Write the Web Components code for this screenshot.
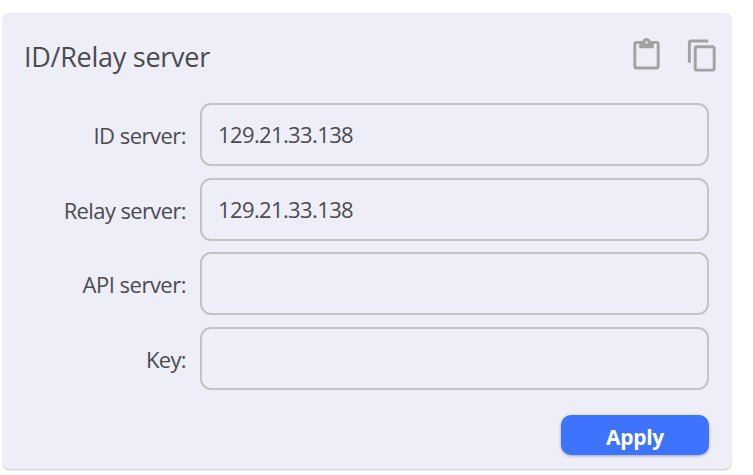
<!DOCTYPE html>
<html lang="en">
<head>
<meta charset="utf-8">
<title>ID/Relay server</title>
<style>
body{margin:0;display:flow-root;box-sizing:border-box;min-height:475px;background:#fff;font-family:"Open Sans","Noto Sans",sans-serif;color:#4b4b4d}
</style>
</head>
<body>
<settings-card heading="ID/Relay server">
  <tool-icon slot="tools" name="paste"></tool-icon>
  <tool-icon slot="tools" name="copy"></tool-icon>
  <server-field label="ID server:" style="--ls:-.52px">129.21.33.138</server-field>
  <server-field label="Relay server:" style="--ls:-.62px">129.21.33.138</server-field>
  <server-field label="API server:" style="--ls:-.5px"></server-field>
  <server-field label="Key:" style="--ls:-.65px"></server-field>
  <apply-button slot="footer">Apply</apply-button>
</settings-card>
<script>
class SettingsCard extends HTMLElement{
  constructor(){
    super();
    this.attachShadow({mode:'open'}).innerHTML=`<style>
:host{display:block;box-sizing:border-box;width:728px;height:456px;margin:13px 0 0 3px;padding:24px 22px 0 21px;background:#eeeef8;border-radius:6px;box-shadow:0 1px 2px rgba(0,0,0,.23)}
header{display:flex;justify-content:space-between;align-items:flex-start;height:66px}
h1{margin:1px 0 0;font-size:27px;line-height:38px;font-weight:400;letter-spacing:-.27px;white-space:nowrap}
.tools{display:flex;gap:21px;margin:1px -11px 0 0}
.fields{display:grid;gap:11.5px}
footer{display:flex;justify-content:flex-end;padding-top:25px}
</style><header><h1></h1><div class="tools"><slot name="tools"></slot></div></header>
<div class="fields"><slot></slot></div><footer><slot name="footer"></slot></footer>`;
  }
  connectedCallback(){this.shadowRoot.querySelector('h1').textContent=this.getAttribute('heading')}
}
class ToolIcon extends HTMLElement{
  connectedCallback(){
    const paths={
      paste:'M19 2h-4.18C14.4.84 13.3 0 12 0S9.6.84 9.18 2H5c-1.1 0-2 .9-2 2v15.6c0 1.1.9 2 2 2h14c1.1 0 2-.9 2-2V4c0-1.1-.9-2-2-2zm-7 .2c.45 0 .8.35.8.8s-.35.8-.8.8-.8-.35-.8-.8.35-.8.8-.8zm7 17.4H5V4h2v3h10V4h2v15.6z',
      copy:'M16 1H4c-1.1 0-2 .9-2 2v14h2V3h12V1zm3 4H8c-1.1 0-2 .9-2 2v14c0 1.1.9 2 2 2h11c1.1 0 2-.9 2-2V7c0-1.1-.9-2-2-2zm0 16H8V7h11v14z'};
    this.attachShadow({mode:'open'}).innerHTML=`<style>:host{display:block}svg{display:block;width:35px;height:35px;fill:#a2a2a2}</style><svg viewBox="0 0 24 24"><path d="${paths[this.getAttribute('name')]}"/></svg>`;
  }
}
class ServerField extends HTMLElement{
  connectedCallback(){
    this.attachShadow({mode:'open'}).innerHTML=`<style>
:host{display:grid;grid-template-columns:162px 509px;column-gap:14px;align-items:center;font-size:22px;line-height:30px}
label{text-align:right;letter-spacing:var(--ls);white-space:nowrap;padding-top:1px}
.box{box-sizing:border-box;height:63px;border:2px solid #c3c3c4;border-radius:11px;padding:14px 16px;letter-spacing:-.62px}
</style><label></label><div class="box"><slot></slot></div>`;
    this.shadowRoot.querySelector('label').textContent=this.getAttribute('label');
  }
}
class ApplyButton extends HTMLElement{
  constructor(){
    super();
    this.attachShadow({mode:'open'}).innerHTML=`<style>
:host{display:block}
button{display:block;width:148px;height:40px;border:0;border-radius:10px;padding:5px 0 0;background:#3d73fe;color:#fff;font:700 21px/30px "Open Sans",sans-serif;letter-spacing:-.3px;box-shadow:0 1px 3px rgba(0,0,0,.3)}
</style><button><slot></slot></button>`;
  }
}
customElements.define('settings-card',SettingsCard);
customElements.define('tool-icon',ToolIcon);
customElements.define('server-field',ServerField);
customElements.define('apply-button',ApplyButton);
</script>
</body>
</html>
